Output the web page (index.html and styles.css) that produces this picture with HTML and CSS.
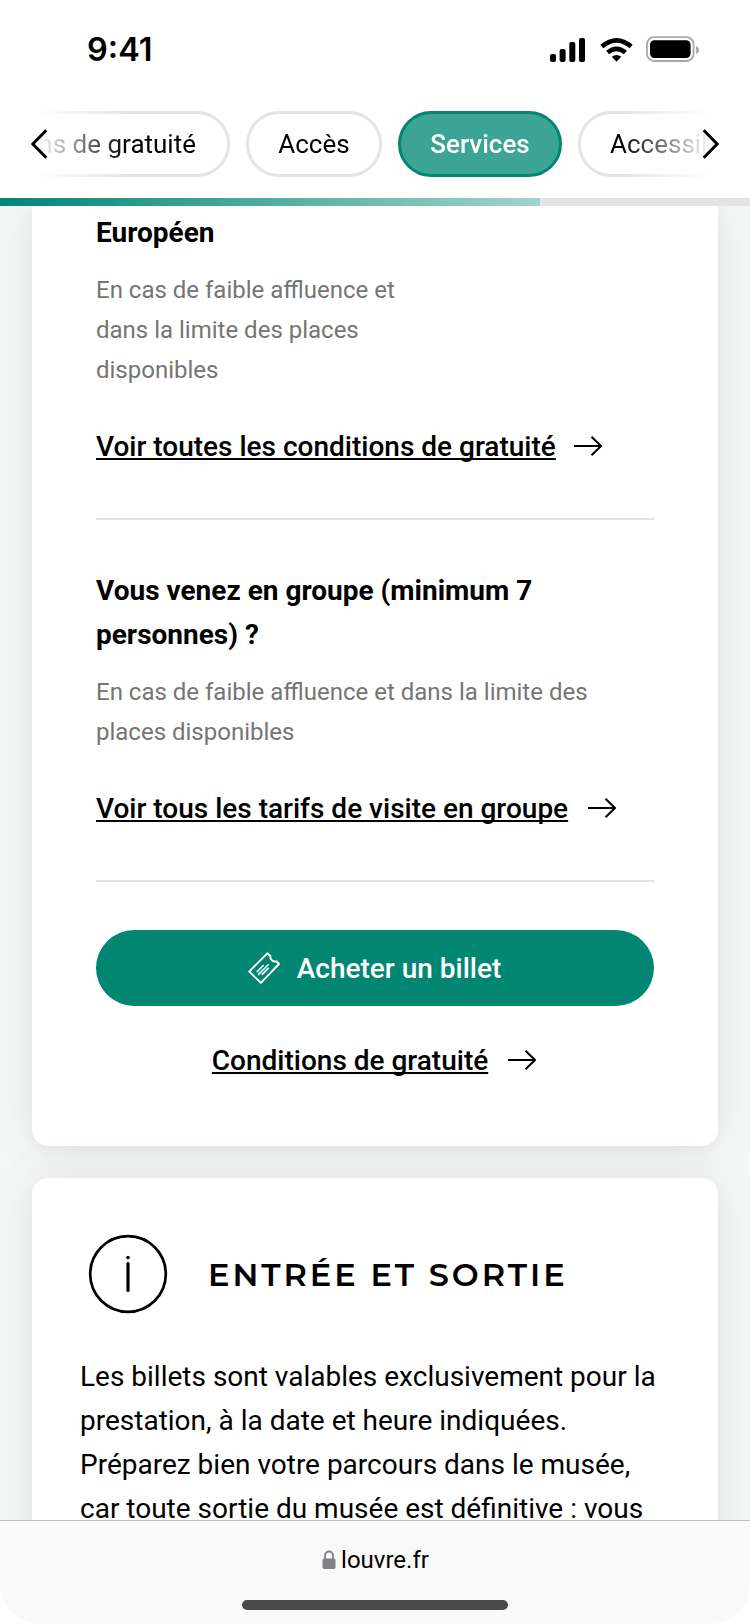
FILE: index.html
```html
<!DOCTYPE html>
<html lang="fr">
<head>
<meta charset="utf-8">
<title>Louvre – Horaires et tarifs</title>
<link rel="stylesheet" href="styles.css">
</head>
<body>
<div class="screen">
  <header class="header">
    <div class="status">
      <span class="clock">9:41</span>
      <svg class="status-icons" width="152" height="28" viewBox="548 35 152 28">
        <rect x="550" y="54" width="6" height="8" rx="2"/>
        <rect x="559.6" y="49" width="6" height="13" rx="2"/>
        <rect x="569.3" y="42" width="6" height="20" rx="2"/>
        <rect x="579" y="38" width="6" height="24" rx="2"/>
        <g fill="none" stroke="#000" stroke-width="4.6">
          <path d="M601.8 46.6Q616.5 34.2 631.2 46.6"/>
          <path d="M607.6 52.6Q616.5 45 625.4 52.6"/>
        </g>
        <path d="M611.8 56.8Q616.5 53 621.2 56.8L616.5 61.8Z"/>
        <rect x="647" y="37.2" width="46.6" height="23.8" rx="7" fill="none" stroke="#a9a9a9" stroke-width="1.8"/>
        <rect x="650" y="40.2" width="40.6" height="17.8" rx="4.4"/>
        <path d="M696 46q3 1.200 3 4t-3 4z" fill="#a9a9a9"/>
      </svg>
    </div>
    <nav class="tabs">
      <svg class="chevron" width="18" height="32" viewBox="0 0 18 32"><path d="M15.300 2.300 1.800 16 15.300 29.700"/></svg>
      <div class="scroller">
        <a class="tab tab-first">Conditions de gratuité</a>
        <a class="tab tab-access">Accès</a>
        <a class="tab tab-active">Services</a>
        <a class="tab tab-last">Accessibilité</a>
      </div>
      <svg class="chevron" width="18" height="32" viewBox="0 0 18 32"><path d="M2.700 2.300 16.200 16 2.700 29.700"/></svg>
    </nav>
  </header>
  <div class="progress"><div class="progress-value"></div></div>

  <main class="content">
    <section class="card rates">
      <h3>Européen</h3>
      <p class="note note-narrow">En cas de faible affluence et dans la limite des places disponibles</p>
      <a class="link link-tight"><span>Voir toutes les conditions de gratuité</span><svg class="arrow" width="28" height="22" viewBox="0 0 28 22"><path d="M0 11H27M17.500 1.800 27 11 17.500 20.200"/></svg></a>
      <hr>
      <h3>Vous venez en groupe (minimum 7 personnes) ?</h3>
      <p class="note">En cas de faible affluence et dans la limite des places disponibles</p>
      <a class="link"><span>Voir tous les tarifs de visite en groupe</span><svg class="arrow" width="28" height="22" viewBox="0 0 28 22"><path d="M0 11H27M17.500 1.800 27 11 17.500 20.200"/></svg></a>
      <hr>
      <a class="button">
        <svg class="ticket" width="32" height="32" viewBox="0 0 32 32"><path d="M19.300 1.300 1.200 19.600 12.900 30.800 31 12 28.600 9.400Q25.800 10 23.800 8.200T22.400 3.900Z"/><path class="ticket-lines" d="M9.200 19.600 15.300 13.500M10.600 22.400 20.200 12.700M14.200 22.400 20.200 16.400"/></svg>
        <span>Acheter un billet</span>
      </a>
      <a class="link link-center"><span>Conditions de gratuité</span><svg class="arrow" width="28" height="22" viewBox="0 0 28 22"><path d="M0 11H27M17.500 1.800 27 11 17.500 20.200"/></svg></a>
    </section>

    <section class="card entry">
      <div class="entry-head">
        <svg width="96" height="96" viewBox="0 0 96 96"><circle cx="48" cy="48" r="37.800" fill="none" stroke="#000" stroke-width="2.700"/><circle cx="48" cy="31.500" r="1.800"/><path d="M48 37.500V64.500" fill="none" stroke="#000" stroke-width="3.200" stroke-linecap="round"/></svg>
        <h2>ENTRÉE ET SORTIE</h2>
      </div>
      <p class="body-text">Les billets sont valables exclusivement pour la<br>prestation, à la date et heure indiquées.<br>Préparez bien votre parcours dans le musée,<br>car toute sortie du musée est définitive : vous</p>
    </section>
  </main>

  <footer class="browser-bar">
    <div class="address">
      <svg width="14" height="20" viewBox="0 0 14 20"><path d="M3 9V5.500a4 4 0 0 1 8 0V9" fill="none" stroke="#828187" stroke-width="1.800"/><rect x=".5" y="8.500" width="13" height="10.500" rx="1.800" fill="#828187"/></svg>
      <span>louvre.fr</span>
    </div>
    <div class="home-indicator"></div>
  </footer>
</div>
</body>
</html>
```
FILE: styles.css
```css
* { box-sizing: border-box; }

body {
  margin: 0;
  background: #fff;
  color: #000;
  font-family: Roboto, "Liberation Sans", sans-serif;
}

h2, h3, p { margin: 0; }

.screen {
  display: flex;
  flex-direction: column;
  width: 750px;
  height: 1624px;
  overflow: hidden;
}

/* Header */
.header { flex: none; height: 198px; }

.status {
  display: flex;
  align-items: center;
  justify-content: space-between;
  height: 111px;
  padding: 0 50px 13px 87px;
}

.clock {
  padding-top: 2px;
  font: 600 32.500px/40px Inter, sans-serif;
}

.tabs {
  display: grid;
  grid-template-columns: 18px 1fr 18px;
  align-items: center;
  height: 66px;
  padding: 0 31px;
}

.chevron {
  z-index: 1;
  grid-row: 1;
  fill: none;
  stroke: #000;
  stroke-width: 3;
}

.chevron:first-child { grid-column: 1; }
.chevron:last-child { grid-column: 3; }

.scroller {
  grid-row: 1;
  grid-column: 1 / -1;
  display: flex;
  gap: 16px;
  overflow: hidden;
  -webkit-mask-image: linear-gradient(to right, transparent 6px, #000 96px, #000 590px, transparent 680px);
  mask-image: linear-gradient(to right, transparent 6px, #000 96px, #000 590px, transparent 680px);
}

.tab {
  flex: none;
  display: flex;
  align-items: center;
  justify-content: center;
  height: 66px;
  border: 3px solid #e4e4e4;
  border-radius: 33px;
  font-size: 26px;
  line-height: 40px;
  white-space: nowrap;
}

.tab-first {
  justify-content: flex-end;
  width: 340px;
  margin-left: -141px;
  padding-right: 31px;
}

.tab-access { width: 136px; }

.tab-active {
  width: 164px;
  border-color: #018672;
  background: #3ba495;
  color: #fff;
  font-weight: 500;
}

.tab-last {
  justify-content: flex-start;
  width: 220px;
  padding-left: 29px;
}

.progress { flex: none; height: 8px; background: #e4e4e4; }

.progress-value {
  width: 540px;
  height: 8px;
  background: linear-gradient(to right, #018672, #a1d4cc);
}

/* Content */
.content {
  flex: 1;
  min-height: 0;
  overflow: hidden;
  display: flex;
  flex-direction: column;
  gap: 32px;
  padding: 0 32px;
  background: #f5f7f6;
}

.card {
  flex: none;
  width: 686px;
  border-radius: 16px;
  background: #fff;
  box-shadow: 0 4px 8px rgba(0, 0, 0, .04), 0 0 48px rgba(0, 10, 5, .08);
}

.rates {
  display: flex;
  flex-direction: column;
  padding: 4px 64px 64px;
  border-radius: 0 0 16px 16px;
}

h3 {
  padding-top: 1px;
  font-size: 28px;
  font-weight: 700;
  line-height: 44px;
}

.note {
  margin-top: 15px;
  color: #757575;
  font-size: 24px;
  line-height: 40px;
}

.note-narrow { width: 320px; }

.link {
  display: flex;
  align-items: center;
  gap: 20px;
  height: 44px;
  margin-top: 34px;
  font-size: 28px;
  font-weight: 500;
  line-height: 44px;
  text-decoration: underline;
  text-decoration-thickness: 1.500px;
  text-underline-offset: 2px;
  text-decoration-skip-ink: none;
  white-space: nowrap;
}

.link span, .button span { padding-top: 2px; }

.link-tight { gap: 18px; }

.link-center { justify-content: center; margin-top: 32px; padding-right: 2px; }

.arrow { fill: none; stroke: #000; stroke-width: 2; }

hr {
  width: 100%;
  height: 2px;
  margin: 50px 0 48px;
  border: 0;
  background: #e4e4e4;
}

.button {
  display: flex;
  align-items: center;
  justify-content: center;
  gap: 17px;
  height: 76px;
  padding-right: 1px;
  border-radius: 38px;
  background: #018672;
  color: #fff;
  font-size: 28px;
  font-weight: 500;
  line-height: 44px;
}

.ticket {
  fill: none;
  stroke: #fff;
  stroke-width: 1.900;
  stroke-linejoin: round;
  stroke-linecap: round;
}

.ticket-lines { stroke-width: 1.500; }

.entry { height: 500px; padding: 48px; }

.entry-head { display: flex; align-items: center; gap: 32px; }

h2 {
  padding-top: 1px;
  font: 600 32px/48px Montserrat, Inter, sans-serif;
  letter-spacing: 2.950px;
  white-space: nowrap;
}

.body-text {
  margin-top: 33px;
  font-size: 28px;
  line-height: 44px;
  white-space: nowrap;
}

/* Browser bar */
.browser-bar {
  flex: none;
  display: flex;
  flex-direction: column;
  align-items: center;
  justify-content: space-between;
  height: 104px;
  padding: 19px 0 14px;
  border-top: 1px solid #bdbdbd;
  border-radius: 0 0 40px 40px;
  background: #f9f9f9;
}

.address {
  display: flex;
  align-items: center;
  gap: 5px;
  padding-left: 1px;
  font-size: 24px;
  line-height: 40px;
}

.home-indicator {
  width: 266px;
  height: 10px;
  border-radius: 5px;
  background: #4a4a4a;
}
```
